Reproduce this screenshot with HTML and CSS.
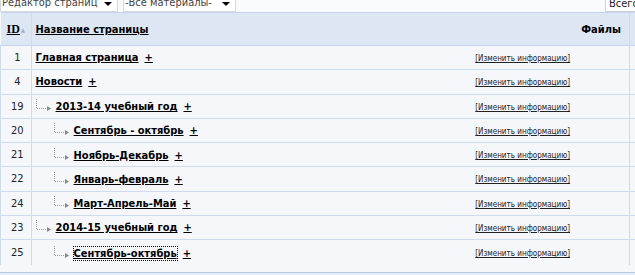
FILE: index.html
```html
<!DOCTYPE html>
<html>
    <head>
        <title>Редактор страниц</title>
        <meta charset="UTF-8">
        <link rel="stylesheet" href="styles.css">
    </head>
    <body>
        <div class="toolbar">
            <div class="select editor"><span>Редактор страниц</span><span class="arrow"></span></div>
            <div class="select filter"><span>-Все материалы-</span><span class="arrow"></span></div>
            <div class="total">Всего</div>
        </div>
        <table class="pages">
            <thead>
                <tr>
                    <th class="id"><a href="#">ID</a><span class="sort">&#9650;</span></th>
                    <th class="title"><a href="#">Название страницы</a></th>
                    <th class="files">Файлы</th>
                    <th class="extra"></th>
                </tr>
            </thead>
            <tbody>
                <tr>
                    <td class="id">1</td>
                    <td class="title"><a href="#">Главная страница</a><a class="add" href="#">+</a></td>
                    <td class="files"><a class="edit" href="#">[Изменить информацию]</a></td>
                    <td class="extra"></td>
                </tr>
                <tr>
                    <td class="id">4</td>
                    <td class="title"><a href="#">Новости</a><a class="add" href="#">+</a></td>
                    <td class="files"><a class="edit" href="#">[Изменить информацию]</a></td>
                    <td class="extra"></td>
                </tr>
                <tr>
                    <td class="id">19</td>
                    <td class="title"><svg class="branch" width="16" height="12" viewBox="0 0 16 12"><path d="M0.5 0V9M1 9.5H12" stroke="#999" stroke-dasharray="1 1" fill="none"/><path d="M11 7L15 9.5L11 12Z" fill="#888"/></svg><a href="#">2013-14 учебный год</a><a class="add" href="#">+</a></td>
                    <td class="files"><a class="edit" href="#">[Изменить информацию]</a></td>
                    <td class="extra"></td>
                </tr>
                <tr>
                    <td class="id">20</td>
                    <td class="title level2"><svg class="branch" width="16" height="12" viewBox="0 0 16 12"><path d="M0.5 0V9M1 9.5H12" stroke="#999" stroke-dasharray="1 1" fill="none"/><path d="M11 7L15 9.5L11 12Z" fill="#888"/></svg><a href="#">Сентябрь - октябрь</a><a class="add" href="#">+</a></td>
                    <td class="files"><a class="edit" href="#">[Изменить информацию]</a></td>
                    <td class="extra"></td>
                </tr>
                <tr>
                    <td class="id">21</td>
                    <td class="title level2"><svg class="branch" width="16" height="12" viewBox="0 0 16 12"><path d="M0.5 0V9M1 9.5H12" stroke="#999" stroke-dasharray="1 1" fill="none"/><path d="M11 7L15 9.5L11 12Z" fill="#888"/></svg><a href="#">Ноябрь-Декабрь</a><a class="add" href="#">+</a></td>
                    <td class="files"><a class="edit" href="#">[Изменить информацию]</a></td>
                    <td class="extra"></td>
                </tr>
                <tr>
                    <td class="id">22</td>
                    <td class="title level2"><svg class="branch" width="16" height="12" viewBox="0 0 16 12"><path d="M0.5 0V9M1 9.5H12" stroke="#999" stroke-dasharray="1 1" fill="none"/><path d="M11 7L15 9.5L11 12Z" fill="#888"/></svg><a href="#">Январь-февраль</a><a class="add" href="#">+</a></td>
                    <td class="files"><a class="edit" href="#">[Изменить информацию]</a></td>
                    <td class="extra"></td>
                </tr>
                <tr>
                    <td class="id">24</td>
                    <td class="title level2"><svg class="branch" width="16" height="12" viewBox="0 0 16 12"><path d="M0.5 0V9M1 9.5H12" stroke="#999" stroke-dasharray="1 1" fill="none"/><path d="M11 7L15 9.5L11 12Z" fill="#888"/></svg><a href="#">Март-Апрель-Май</a><a class="add" href="#">+</a></td>
                    <td class="files"><a class="edit" href="#">[Изменить информацию]</a></td>
                    <td class="extra"></td>
                </tr>
                <tr>
                    <td class="id">23</td>
                    <td class="title"><svg class="branch" width="16" height="12" viewBox="0 0 16 12"><path d="M0.5 0V9M1 9.5H12" stroke="#999" stroke-dasharray="1 1" fill="none"/><path d="M11 7L15 9.5L11 12Z" fill="#888"/></svg><a href="#">2014-15 учебный год</a><a class="add" href="#">+</a></td>
                    <td class="files"><a class="edit" href="#">[Изменить информацию]</a></td>
                    <td class="extra"></td>
                </tr>
                <tr class="last">
                    <td class="id">25</td>
                    <td class="title level2"><svg class="branch" width="16" height="12" viewBox="0 0 16 12"><path d="M0.5 0V9M1 9.5H12" stroke="#999" stroke-dasharray="1 1" fill="none"/><path d="M11 7L15 9.5L11 12Z" fill="#888"/></svg><a class="focused" href="#">Сентябрь-октябрь</a><a class="add" href="#">+</a></td>
                    <td class="files"><a class="edit" href="#">[Изменить информацию]</a></td>
                    <td class="extra"></td>
                </tr>
            </tbody>
        </table>
        <div class="footer"></div>
    </body>
</html>
```

FILE: styles.css
```css
body{
    margin: 0;
    background-color: #f5f7fb;
    font-family: "DejaVu Sans Condensed", "DejaVu Sans", sans-serif;
    font-size: 11px;
    color: #000;
    overflow: hidden;
}
a{
    color: #000;
}
.toolbar{
    display: flex;
    align-items: flex-end;
    height: 12px;
    background-color: #f9fafc;
}
.select{
    display: flex;
    align-items: center;
    justify-content: space-between;
    height: 19px;
    margin-top: -7px;
    padding-left: 1px;
    border: 1px solid #d4d9e0;
    border-top: none;
    background-color: #fff;
    color: #444;
    font-family: "DejaVu Sans Condensed", "DejaVu Sans", sans-serif;
    font-size: 11px;
    white-space: nowrap;
    box-sizing: border-box;
}
.select.editor{
    width: 118px;
}
.select.filter{
    width: 113px;
    margin-left: 5px;
}
.arrow{
    width: 0;
    height: 0;
    margin-right: 5px;
    margin-top: 3px;
    border-left: 4px solid transparent;
    border-right: 4px solid transparent;
    border-top: 4px solid #000;
}
.total{
    margin-left: auto;
    width: 30px;
    height: 19px;
    margin-top: -7px;
    padding-left: 3px;
    border: 1px solid #ccd3dc;
    border-right: none;
    background-color: #fff;
    color: #222;
    font-family: "DejaVu Sans Condensed", "DejaVu Sans", sans-serif;
    line-height: 19px;
    box-sizing: border-box;
    white-space: nowrap;
    overflow: hidden;
}
.pages{
    width: 660px;
    border-collapse: collapse;
    table-layout: fixed;
    border-top: 1px solid #c7d5ea;
}
.pages th{
    height: 32px;
    padding: 0;
    background-color: #dde7f4;
    border-bottom: 1px solid #c7d5ea;
    font-weight: bold;
    text-align: left;
}
.pages td{
    height: 23.25px;
    padding: 0;
    border-bottom: 1px solid #cfdcee;
    vertical-align: middle;
}
.pages tr.last td{
    border-bottom: none;
    height: 25px;
}
.pages .id{
    width: 27px;
    padding-left: 3px;
    border-left: 1px solid #cfdcee;
    border-right: 1px solid #cfdcee;
    text-align: center;
    color: #222;
}
.pages th.id{
    border-left: none;
    text-align: left;
    padding-left: 6px;
    width: 24px;
}
.pages th.id a{
    font-family: "Liberation Serif", serif;
    font-size: 12px;
}
.sort{
    margin-left: 1px;
    font-size: 6px;
    color: #9fb1c9;
    vertical-align: 1px;
}
.pages .title{
    width: 380px;
    padding-left: 4px;
    font-weight: bold;
    white-space: nowrap;
}
.pages .title.level2{
    padding-left: 22px;
}
.pages .files{
    width: 212px;
    text-align: center;
}
.pages th.files{
    text-align: right;
    padding-right: 8px;
    width: 204px;
}
.pages .extra{
    width: 30px;
    border-left: 1px solid #cfdcee;
}
.add{
    margin-left: 6px;
}
.edit{
    font-size: 8px;
    font-weight: normal;
    color: #222;
}
.branch{
    margin-right: 4px;
    vertical-align: -1px;
}
.focused{
    outline: 1px dotted #000;
}
.footer{
    height: 2px;
    margin-top: 7px;
    border-top: 1px solid #b3c6e2;
    border-bottom: 1px solid #b3c6e2;
    background-color: #e6edf7;
}
```
